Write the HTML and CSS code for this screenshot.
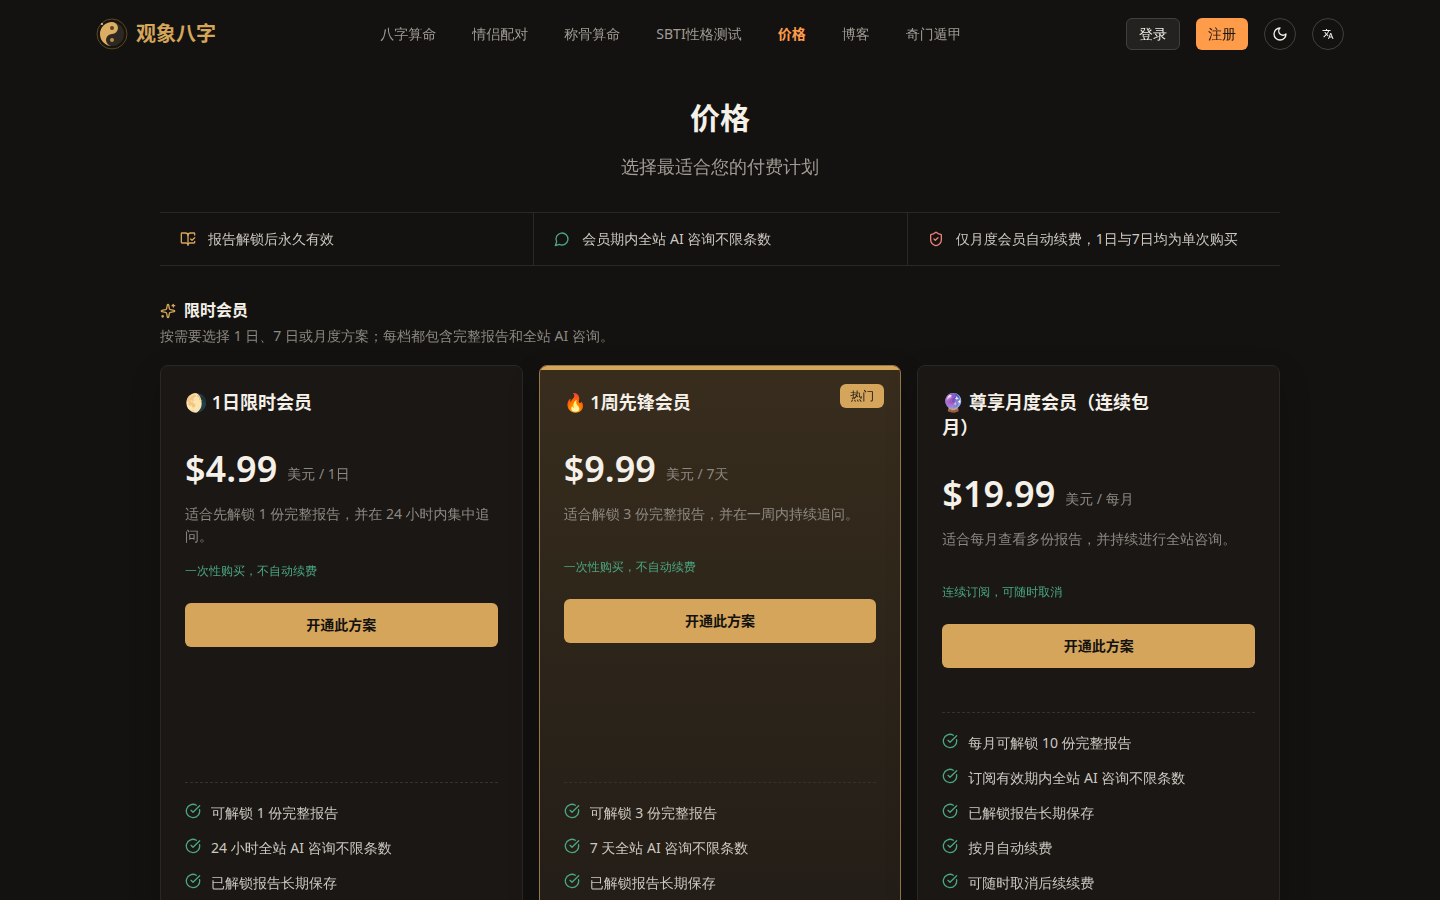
FILE: index.html
```html
<!DOCTYPE html>
<html lang="zh">
<head>
    <meta charset="UTF-8">
    <meta name="viewport" content="width=device-width, initial-scale=1.0">
    <title>价格 - 观象八字</title>
    <link rel="stylesheet" href="styles.css">
</head>
<body>
    <!-- 图标 -->
    <svg class="sprite" aria-hidden="true">
        <symbol id="check" viewBox="0 0 24 24"><path d="M21.801 10A10 10 0 1 1 17 3.335"/><path d="m9 11 3 3L22 4"/></symbol>
        <symbol id="book" viewBox="0 0 24 24"><path d="M12 21V7"/><path d="m16 12 2 2 4-4"/><path d="M22 6V4a1 1 0 0 0-1-1h-5a4 4 0 0 0-4 4 4 4 0 0 0-4-4H3a1 1 0 0 0-1 1v13a1 1 0 0 0 1 1h6a3 3 0 0 1 3 3 3 3 0 0 1 3-3h6a1 1 0 0 0 1-1v-1.3"/></symbol>
        <symbol id="chat" viewBox="0 0 24 24"><path d="M7.9 20A9 9 0 1 0 4 16.1L2 22Z"/></symbol>
        <symbol id="shield" viewBox="0 0 24 24"><path d="M20 13c0 5-3.5 7.5-7.66 8.95a1 1 0 0 1-.67-.01C7.5 20.5 4 18 4 13V6a1 1 0 0 1 1-1c2 0 4.5-1.2 6.24-2.72a1.17 1.17 0 0 1 1.52 0C14.51 3.81 17 5 19 5a1 1 0 0 1 1 1z"/><path d="m9 12 2 2 4-4"/></symbol>
        <symbol id="sparkles" viewBox="0 0 24 24"><path d="M11.017 2.814a1 1 0 0 1 1.966 0l1.051 5.558a2 2 0 0 0 1.594 1.594l5.558 1.051a1 1 0 0 1 0 1.966l-5.558 1.051a2 2 0 0 0-1.594 1.594l-1.051 5.558a1 1 0 0 1-1.966 0l-1.051-5.558a2 2 0 0 0-1.594-1.594l-5.558-1.051a1 1 0 0 1 0-1.966l5.558-1.051a2 2 0 0 0 1.594-1.594z"/><path d="M20 2v4"/><path d="M22 4h-4"/><circle cx="4" cy="20" r="1"/></symbol>
        <symbol id="moon" viewBox="0 0 24 24"><path d="M12 3a6 6 0 0 0 9 9 9 9 0 1 1-9-9Z"/></symbol>
        <symbol id="translate" viewBox="0 0 24 24"><path d="M12.87 15.07l-2.54-2.51.03-.03c1.74-1.94 2.98-4.17 3.71-6.53H17V4h-7V2H8v2H1v1.99h11.17C11.5 7.92 10.44 9.75 9 11.35 8.07 10.32 7.3 9.19 6.69 8h-2c.73 1.63 1.73 3.17 2.98 4.56l-5.09 5.02L4 19l5-5 3.11 3.11.76-2.04zM18.5 10h-2L12 22h2l1.12-3h4.75L21 22h2l-4.5-12zm-2.62 7l1.62-4.33L19.12 17h-3.24z"/></symbol>
    </svg>

    <header class="header">
        <a class="logo" href="#">
            <svg class="logo-img" viewBox="0 0 32 32" aria-hidden="true">
                <circle cx="16" cy="16" r="15" fill="#17130d" stroke="#5c4826"/>
                <circle cx="16" cy="16" r="12" fill="#2e2822"/>
                <path d="M16 4a12 12 0 0 0 0 24a6 6 0 0 1 0-12a6 6 0 0 0 0-12z" fill="#dcae63"/>
                <circle cx="16" cy="10" r="2" fill="#5c4220"/>
                <circle cx="16" cy="22" r="2" fill="#b98d4a"/>
                <circle cx="6" cy="6" r="1" fill="#f2dcb0"/>
            </svg>
            <span>观象八字</span>
        </a>
        <nav class="nav">
            <a href="#">八字算命</a>
            <a href="#">情侣配对</a>
            <a href="#">称骨算命</a>
            <a href="#">SBTI性格测试</a>
            <a class="on" href="#">价格</a>
            <a href="#">博客</a>
            <a href="#">奇门遁甲</a>
        </nav>
        <div class="actions">
            <button class="btn login">登录</button>
            <button class="btn signup">注册</button>
            <button class="round" aria-label="切换主题"><svg class="icon"><use href="#moon"/></svg></button>
            <button class="round" aria-label="切换语言"><svg class="icon translate"><use href="#translate"/></svg></button>
        </div>
    </header>

    <main class="main">
        <h1>价格</h1>
        <p class="subtitle">选择最适合您的付费计划</p>

        <ul class="notes">
            <li><svg class="icon gold"><use href="#book"/></svg>报告解锁后永久有效</li>
            <li><svg class="icon green"><use href="#chat"/></svg>会员期内全站 AI 咨询不限条数</li>
            <li><svg class="icon red"><use href="#shield"/></svg>仅月度会员自动续费，1日与7日均为单次购买</li>
        </ul>

        <section>
            <h2><svg class="icon gold"><use href="#sparkles"/></svg>限时会员</h2>
            <p class="lead">按需要选择 1 日、7 日或月度方案；每档都包含完整报告和全站 AI 咨询。</p>

            <div class="plans">
                <article class="card">
                    <h3>🌖 1日限时会员</h3>
                    <p class="price"><strong>$4.99</strong><span>美元 / 1日</span></p>
                    <p class="desc">适合先解锁 1 份完整报告，并在 24 小时内集中追问。</p>
                    <p class="renew">一次性购买，不自动续费</p>
                    <button class="buy">开通此方案</button>
                    <ul class="features">
                        <li><svg class="icon"><use href="#check"/></svg>可解锁 1 份完整报告</li>
                        <li><svg class="icon"><use href="#check"/></svg>24 小时全站 AI 咨询不限条数</li>
                        <li><svg class="icon"><use href="#check"/></svg>已解锁报告长期保存</li>
                    </ul>
                </article>

                <article class="card hot">
                    <span class="badge">热门</span>
                    <h3>🔥 1周先锋会员</h3>
                    <p class="price"><strong>$9.99</strong><span>美元 / 7天</span></p>
                    <p class="desc">适合解锁 3 份完整报告，并在一周内持续追问。</p>
                    <p class="renew">一次性购买，不自动续费</p>
                    <button class="buy">开通此方案</button>
                    <ul class="features">
                        <li><svg class="icon"><use href="#check"/></svg>可解锁 3 份完整报告</li>
                        <li><svg class="icon"><use href="#check"/></svg>7 天全站 AI 咨询不限条数</li>
                        <li><svg class="icon"><use href="#check"/></svg>已解锁报告长期保存</li>
                    </ul>
                </article>

                <article class="card">
                    <h3>🔮 尊享月度会员（连续包月）</h3>
                    <p class="price"><strong>$19.99</strong><span>美元 / 每月</span></p>
                    <p class="desc">适合每月查看多份报告，并持续进行全站咨询。</p>
                    <p class="renew">连续订阅，可随时取消</p>
                    <button class="buy">开通此方案</button>
                    <ul class="features">
                        <li><svg class="icon"><use href="#check"/></svg>每月可解锁 10 份完整报告</li>
                        <li><svg class="icon"><use href="#check"/></svg>订阅有效期内全站 AI 咨询不限条数</li>
                        <li><svg class="icon"><use href="#check"/></svg>已解锁报告长期保存</li>
                        <li><svg class="icon"><use href="#check"/></svg>按月自动续费</li>
                        <li><svg class="icon"><use href="#check"/></svg>可随时取消后续续费</li>
                    </ul>
                </article>
            </div>
        </section>
    </main>
</body>
</html>
```
FILE: styles.css
```css
* {margin: 0; padding: 0; box-sizing: border-box;}
body {
    background-color: #131210;
    color: #f5f0e8;
    font-family: "Noto Sans", "WenQuanYi Zen Hei", "Noto Sans CJK SC", sans-serif;
    font-size: 14px;
    line-height: 20px;
}
a {
    color: inherit;
    text-decoration: none;
}
ul {list-style: none;}
button {
    font: inherit;
    cursor: pointer;
}
/* 粗体文字用带粗体字重的字体 */
h1, h2, h3, .logo, .nav .on, .buy {
    font-family: "Noto Sans", "Noto Sans CJK SC", sans-serif;
    font-weight: 600;
}
.sprite {
    display: none;
}
.icon {
    width: 16px;
    height: 16px;
    flex-shrink: 0;
    fill: none;
    stroke: currentColor;
    stroke-width: 2;
    stroke-linecap: round;
    stroke-linejoin: round;
}
.gold {color: #d4a55a;}
.green {color: #4aa782;}
.red {color: #e8827a;}

/* 顶部导航 */
.header {
    display: flex;
    justify-content: space-between;
    align-items: center;
    height: 68px;
    padding: 0 96px;
}
.logo {
    display: flex;
    align-items: center;
    gap: 8px;
    font-size: 20px;
    color: #d4a55a;
}
.logo-img {
    width: 32px;
    height: 32px;
}
.nav {
    display: flex;
    gap: 36px;
    color: #a19c95;
}
.nav .on {
    color: #ff9c4a;
}
.actions {
    display: flex;
    gap: 16px;
}
.btn {
    height: 32px;
    padding: 0 12px;
    border: 0;
    border-radius: 6px;
    font-weight: 500;
}
.login {
    border: 1px solid #41403e;
    background-color: #232220;
    color: #f5f0e8;
}
.signup {
    background-color: #ff9c4a;
    color: #1c1712;
}
.round {
    display: flex;
    justify-content: center;
    align-items: center;
    width: 32px;
    height: 32px;
    border: 1px solid #41403e;
    border-radius: 50%;
    background: none;
    color: #f5f0e8;
}
.translate {
    width: 12px;
    height: 12px;
    fill: currentColor;
    stroke: none;
}

/* 页面标题 */
.main {
    max-width: 1168px;
    margin: 0 auto;
    padding: 32px 24px 64px;
}
h1 {
    font-size: 30px;
    line-height: 36px;
    text-align: center;
}
.subtitle {
    margin-top: 16px;
    font-size: 18px;
    line-height: 28px;
    text-align: center;
    color: #a19c95;
}
.notes {
    display: grid;
    grid-template-columns: repeat(3, 1fr);
    margin-top: 32px;
    border-top: 1px solid #2a2725;
    border-bottom: 1px solid #2a2725;
    color: #cdc8c0;
}
.notes li {
    display: flex;
    align-items: center;
    gap: 12px;
    padding: 16px 20px;
}
.notes li + li {
    border-left: 1px solid #2a2725;
}
h2 {
    display: flex;
    align-items: center;
    gap: 8px;
    margin-top: 32px;
    font-size: 16px;
    line-height: 25px;
}
.lead {
    margin-top: 2px;
    line-height: 22px;
    color: #8d8882;
}

/* 方案卡片 */
.plans {
    display: grid;
    grid-template-columns: repeat(3, 1fr);
    gap: 16px;
    margin-top: 18px;
}
.card {
    display: flex;
    flex-direction: column;
    position: relative;
    padding: 24px;
    border: 1px solid #2a2725;
    border-radius: 8px;
    background-color: #1a1714;
    box-shadow: 0 12px 32px rgba(0, 0, 0, 0.2);
}
.hot {
    border-color: #977742;
    background-image: linear-gradient(#382d1d, #221d17);
    overflow: hidden;
}
.hot::before {
    content: "";
    position: absolute;
    left: 0;
    top: 0;
    width: 100%;
    height: 4px;
    background-color: #d4a55a;
}
.badge {
    position: absolute;
    right: 16px;
    top: 18px;
    padding: 4px 10px;
    border-radius: 6px;
    background-color: #d4a55a;
    color: #1c1712;
    font-size: 12px;
    font-weight: 500;
    line-height: 16px;
}
h3 {
    padding-right: 80px;
    font-size: 18px;
    line-height: 25px;
}
.price {
    display: flex;
    align-items: flex-end;
    gap: 10px;
    margin-top: 36px;
    color: #8d8882;
}
.price span {
    padding-bottom: 3px;
}
.price strong {
    font-size: 36px;
    font-weight: 600;
    line-height: 36px;
    color: #f5f0e8;
}
.desc {
    min-height: 40px;
    margin-top: 16px;
    line-height: 22px;
    color: #8d8882;
}
.renew {
    margin-top: 16px;
    font-size: 12px;
    line-height: 16px;
    color: #4aa782;
}
.buy {
    height: 44px;
    flex-shrink: 0;
    margin-top: 24px;
    margin-bottom: 44px;
    border: 0;
    border-radius: 6px;
    background-color: #d4a55a;
    color: #131210;
}
.features {
    display: flex;
    flex-direction: column;
    gap: 12px;
    margin-top: auto;
    padding-top: 18px;
    border-top: 1px dashed #35312d;
    line-height: 23px;
    color: #cdc8c0;
}
.features li {
    display: flex;
    gap: 10px;
}
.features .icon {
    margin-top: 2px;
    color: #4aa782;
}
```
